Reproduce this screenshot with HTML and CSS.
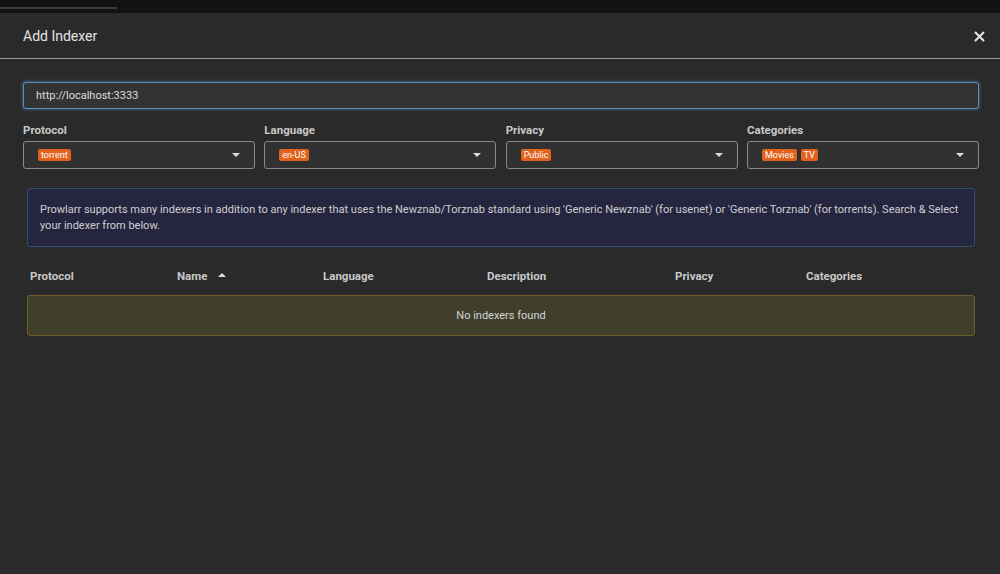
FILE: index.html
```html
<!DOCTYPE html>
<html lang="en">
<head>
    <meta charset="UTF-8">
    <title>Add Indexer</title>
    <link rel="stylesheet" href="styles.css">
</head>
<body>
    <div class="topbar"><div class="progreso"></div></div>
    <div class="modal">
        <div class="cabecera">
            <span class="titulo">Add Indexer</span>
            <span class="cerrar">
                <svg width="11" height="11" viewBox="0 0 11 11"><path d="M1.5 1.5 L9.5 9.5 M9.5 1.5 L1.5 9.5" stroke="#e6e6e6" stroke-width="2" stroke-linecap="round"/></svg>
            </span>
        </div>
        <div class="cuerpo">
            <input type="text" class="buscar" value="http://localhost:3333">

            <div class="filtros">
                <div class="filtro">
                    <label>Protocol</label>
                    <div class="select"><span class="tag">torrent</span><span class="flecha"></span></div>
                </div>
                <div class="filtro">
                    <label>Language</label>
                    <div class="select"><span class="tag">en-US</span><span class="flecha"></span></div>
                </div>
                <div class="filtro">
                    <label>Privacy</label>
                    <div class="select"><span class="tag">Public</span><span class="flecha"></span></div>
                </div>
                <div class="filtro">
                    <label>Categories</label>
                    <div class="select"><span class="tag">Movies</span><span class="tag">TV</span><span class="flecha"></span></div>
                </div>
            </div>

            <div class="info">
                Prowlarr supports many indexers in addition to any indexer that uses the Newznab/Torznab standard using 'Generic Newznab' (for usenet) or 'Generic Torznab' (for torrents). Search &amp; Select your indexer from below.
            </div>

            <div class="tabla-cabecera">
                <div class="col c1">Protocol</div>
                <div class="col c2">Name <span class="orden"></span></div>
                <div class="col c3">Language</div>
                <div class="col c4">Description</div>
                <div class="col c5">Privacy</div>
                <div class="col c6">Categories</div>
            </div>

            <div class="vacio">No indexers found</div>
        </div>
    </div>
</body>
</html>
```

FILE: styles.css
```css
body {
    margin: 0;
    background: #2a2a2a;
    font-family: Roboto, "Liberation Sans", sans-serif;
    color: #ccc;
    height: 574px;
    overflow: hidden;
}
.topbar {
    height: 13px;
    background: #121212;
    padding-top: 7px;
    box-sizing: border-box;
}
.progreso {
    width: 117px;
    height: 2px;
    background: #3a3a3a;
}
.modal {
    background: #2a2a2a;
}
.cabecera {
    display: flex;
    align-items: center;
    justify-content: space-between;
    height: 45px;
    padding: 0 15px 0 23px;
    border-bottom: 1px solid #9a9a9a;
}
.titulo {
    font-size: 14px;
    color: #e4e4e4;
}
.cerrar {
    display: flex;
    padding-top: 1px;
}
.cuerpo {
    padding: 23px 21px 0 23px;
}
.buscar {
    display: block;
    width: 100%;
    box-sizing: border-box;
    height: 27px;
    background: #333;
    border: 1px solid #5f8ec2;
    border-radius: 3px;
    box-shadow: 0 0 3px 1px rgba(95, 142, 194, 0.45);
    color: #ddd;
    font-family: Roboto, "Liberation Sans", sans-serif;
    font-size: 11px;
    padding: 0 12px;
    outline: none;
}
.filtros {
    display: grid;
    grid-template-columns: repeat(4, 1fr);
    gap: 9.3px;
    margin-top: 14px;
}
.filtro label {
    display: block;
    font-size: 11.5px;
    font-weight: bold;
    color: #c8c8c8;
    margin-bottom: 3px;
    line-height: 15px;
}
.select {
    display: flex;
    align-items: center;
    height: 28px;
    box-sizing: border-box;
    border: 1px solid #8a8a8a;
    border-radius: 3px;
    background: #313131;
    padding: 0 14px 0 14px;
    gap: 4px;
}
.tag {
    background: #e2611b;
    color: #fff;
    font-size: 9px;
    line-height: 12px;
    padding: 0 3px;
    border-radius: 2px;
}
.flecha {
    margin-left: auto;
    width: 0;
    height: 0;
    border-left: 4px solid transparent;
    border-right: 4px solid transparent;
    border-top: 4px solid #ddd;
}
.info {
    margin: 19px 4px 0 4px;
    background: #252540;
    border: 1px solid #30506b;
    border-radius: 3px;
    padding: 13px 12px 12px 12px;
    font-size: 11px;
    line-height: 16px;
    color: #cfcfcf;
}
.tabla-cabecera {
    display: flex;
    margin: 21px 4px 0 4px;
    padding-left: 3px;
    font-size: 11.5px;
    font-weight: bold;
    color: #c8c8c8;
    height: 16px;
    align-items: center;
}
.c1 { width: 147px; }
.c2 { width: 146px; }
.c3 { width: 164px; }
.c4 { width: 188px; }
.c5 { width: 131px; }
.orden {
    display: inline-block;
    width: 0;
    height: 0;
    margin-left: 8px;
    vertical-align: 3px;
    border-left: 4px solid transparent;
    border-right: 4px solid transparent;
    border-bottom: 4px solid #ddd;
}
.vacio {
    margin: 11px 4px 0 4px;
    height: 41px;
    box-sizing: border-box;
    background: #403f2c;
    border: 1px solid #6e5e2e;
    border-radius: 3px;
    display: flex;
    align-items: center;
    justify-content: center;
    font-size: 11px;
    color: #d4d4d4;
}
```
